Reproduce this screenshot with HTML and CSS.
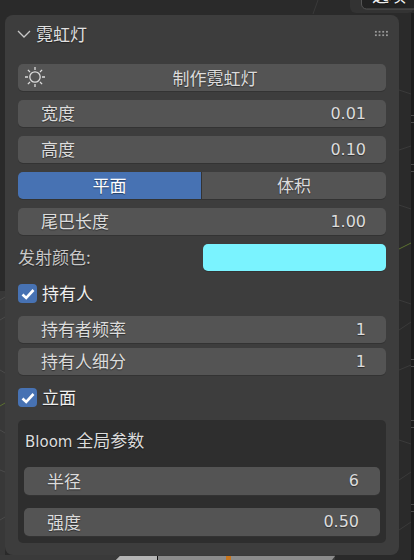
FILE: index.html
```html
<!DOCTYPE html>
<html lang="en">
<head>
  <meta charset="UTF-8">
  <title>Neon Light Panel</title>
  <link rel="stylesheet" href="styles.css">
</head>
<body>

  <!-- Viewport behind the panel -->
  <svg class="backdrop" width="414" height="560" viewBox="0 0 414 560">
    <rect x="0" y="291" width="5" height="269" fill="#383838"/>
    <rect x="0" y="555" width="414" height="5" fill="#3a3a3a"/>
    <rect x="335" y="555" width="79" height="5" fill="#2a2a2a"/>
    <rect x="411" y="13" width="3" height="547" fill="#1c1c1c"/>
    <path d="M411 115.5 H414 M411 122.5 H414 M411 164.5 H414 M411 171.5 H414 M411 359.5 H414 M411 366.5 H414 M411 420.5 H414 M411 427.5 H414 M411 504.5 H414 M411 511.5 H414" stroke="#4a4a4a" fill="none"/>
    <rect x="350" y="-10" width="64" height="23" rx="6" fill="#333"/>
    <rect x="361.5" y="-10" width="60" height="19" rx="5" fill="#222" stroke="#555"/>
    <text class="clipped" x="372" y="2">选项</text>
    <path d="M313 14 L318 0" stroke="#3a3a3a" fill="none"/>
    <path d="M399 249 L411 243" stroke="#5a7030" fill="none"/>
    <path d="M0 406 L5 403" stroke="#5a7030" fill="none"/>
    <path d="M0 300 L5 297 M0 320 L5 317 M0 370 L5 373 M0 430 L5 433 M0 470 L5 472 M0 520 L5 517" stroke="#4a4a4a" fill="none"/>
    <path d="M399 90 L411 94 M399 150 L411 146 M399 205 L411 209 M399 300 L411 304 M399 330 L411 322 M399 370 L411 365 M399 440 L411 444 M399 480 L411 472 M399 530 L411 522" stroke="#3a3a3a" fill="none"/>
    <path d="M116 560 L120 556 H335 L332 560 Z" fill="#8c8c8c"/>
    <path d="M116 560 L120 556 H157 V560 Z" fill="#b5b5b5"/>
    <rect x="157" y="556" width="1" height="4" fill="#111"/>
    <rect x="226" y="556" width="5" height="4" fill="#c9761d"/>
  </svg>

  <!-- Panel -->
  <div class="panel">
    <div class="panel-header">
      <svg class="chevron" width="14" height="8" viewBox="0 0 14 8">
        <path d="M1 1 L7 7 L13 1" fill="none" stroke="#c8c8c8" stroke-width="1.3"/>
      </svg>
      <span class="panel-title">霓虹灯</span>
      <div class="grip"></div>
    </div>

    <div class="btn operator">
      <svg class="sun" width="22" height="22" viewBox="0 0 22 22">
        <circle cx="11" cy="11" r="5.2" fill="none" stroke="#dcdcdc" stroke-width="1.3"/>
        <path d="M11 1 V4 M11 18 V21 M1 11 H4 M18 11 H21 M3.9 3.9 L6 6 M16 16 L18.1 18.1 M3.9 18.1 L6 16 M16 6 L18.1 3.9" stroke="#dcdcdc" stroke-width="1.3"/>
      </svg>
      <span>制作霓虹灯</span>
    </div>

    <div class="field gap-9"><span>宽度</span><span class="val">0.01</span></div>
    <div class="field gap-9"><span>高度</span><span class="val">0.10</span></div>

    <div class="toggle gap-9">
      <div class="toggle-item active">平面</div>
      <div class="toggle-item">体积</div>
    </div>

    <div class="field gap-9"><span>尾巴长度</span><span class="val">1.00</span></div>

    <div class="color-row gap-9">
      <span class="color-label">发射颜色:</span>
      <div class="swatch"></div>
    </div>

    <label class="check gap-13">
      <span class="box"><svg width="14" height="12" viewBox="0 0 14 12"><path d="M1.5 6.5 L5.2 10 L12.5 2" fill="none" stroke="#fff" stroke-width="2.6"/></svg></span>
      <span>持有人</span>
    </label>

    <div class="field gap-13"><span>持有者频率</span><span class="val">1</span></div>
    <div class="field gap-5"><span>持有人细分</span><span class="val">1</span></div>

    <label class="check gap-13">
      <span class="box"><svg width="14" height="12" viewBox="0 0 14 12"><path d="M1.5 6.5 L5.2 10 L12.5 2" fill="none" stroke="#fff" stroke-width="2.6"/></svg></span>
      <span>立面</span>
    </label>

    <div class="sub-box">
      <div class="sub-title"><span class="latin">Bloom</span> 全局参数</div>
      <div class="field tall"><span>半径</span><span class="val">6</span></div>
      <div class="field tall gap-13"><span>强度</span><span class="val">0.50</span></div>
    </div>
  </div>

</body>
</html>
```

FILE: styles.css
```css
/* General body and font styling */
html, body {
  margin: 0;
  height: 100%;
  overflow: hidden;
}

body {
  position: relative;
  background-color: #2a2a2a;
  color: #dcdcdc;
  font-family: "Noto Sans CJK SC", sans-serif;
  font-size: 17px;
  line-height: 1;
  text-shadow: 0 1px 1px rgba(0, 0, 0, 0.45);
}

.backdrop {
  position: absolute;
  top: 0;
  left: 0;
}

.clipped {
  fill: #eee;
  font-size: 17px;
}

/* Panel */
.panel {
  position: relative;
  box-sizing: border-box;
  width: 394px;
  height: 540px;
  margin: 15px 0 0 5px;
  padding: 0 13px;
  background-color: #3d3d3d;
  border-radius: 8px;
}

.panel-header {
  display: flex;
  align-items: center;
  height: 37px;
  margin-bottom: 12px;
}

.chevron {
  margin: 0 5px 0 -1px;
}

.panel-title {
  color: #e0e0e0;
}

.grip {
  width: 15px;
  height: 7px;
  margin: 0 -3px 0 auto;
  background-image: radial-gradient(#9a9a9a 1px, transparent 1px);
  background-size: 3.7px 3.5px;
}

/* Rows */
.gap-5 { margin-top: 5px; }
.gap-9 { margin-top: 9px; }
.gap-13 { margin-top: 13px; }

.btn,
.field {
  box-sizing: border-box;
  height: 27px;
  background-color: #545454;
  border-radius: 5px;
  box-shadow: 0 1px 0 #333;
}

.btn {
  position: relative;
  display: flex;
  align-items: center;
  justify-content: center;
  padding-left: 26px;
}

.sun {
  position: absolute;
  left: 6px;
  top: 2px;
}

.field {
  display: flex;
  align-items: center;
  justify-content: space-between;
  padding: 0 20px 0 23px;
}

/* CJK labels sit a little above the digits */
.field span:first-child,
.check span:last-child {
  padding-bottom: 2px;
}

.val,
.latin {
  font-family: "DejaVu Sans", sans-serif;
  font-size: 16px;
}

.latin {
  font-size: 15px;
}

/* Toggle */
.toggle {
  display: flex;
  height: 27px;
  border-radius: 5px;
  overflow: hidden;
  box-shadow: 0 1px 0 #333;
}

.toggle-item {
  flex: 1;
  display: flex;
  align-items: center;
  justify-content: center;
  padding-bottom: 3px;
  background-color: #545454;
}

.toggle-item.active {
  flex: 0 0 184px;
  box-sizing: border-box;
  background-color: #4772b3;
  border-right: 1px solid #333;
  color: #fff;
}

/* Color */
.color-row {
  display: flex;
  align-items: center;
  justify-content: space-between;
  height: 27px;
}

.color-label {
  color: #c8c8c8;
  padding-bottom: 3px;
}

.swatch {
  width: 183px;
  height: 27px;
  background-color: #7af3ff;
  border-radius: 5px;
  box-shadow: 0 1px 0 #333;
}

/* Checkboxes */
.check {
  display: flex;
  align-items: center;
  gap: 5px;
  height: 19px;
  color: #f0f0f0;
}

.box {
  display: flex;
  align-items: center;
  justify-content: center;
  width: 19px;
  height: 19px;
  background-color: #4772b3;
  border-radius: 4px;
}

/* Bloom sub box */
.sub-box {
  box-sizing: border-box;
  height: 123px;
  margin-top: 13px;
  padding: 0 6px;
  background-color: #2e2e2e;
  border-radius: 5px;
}

.sub-title {
  height: 47px;
  padding: 11px 0 0 1px;
  box-sizing: border-box;
}

.field.tall {
  height: 28px;
  padding-right: 21px;
}
```
